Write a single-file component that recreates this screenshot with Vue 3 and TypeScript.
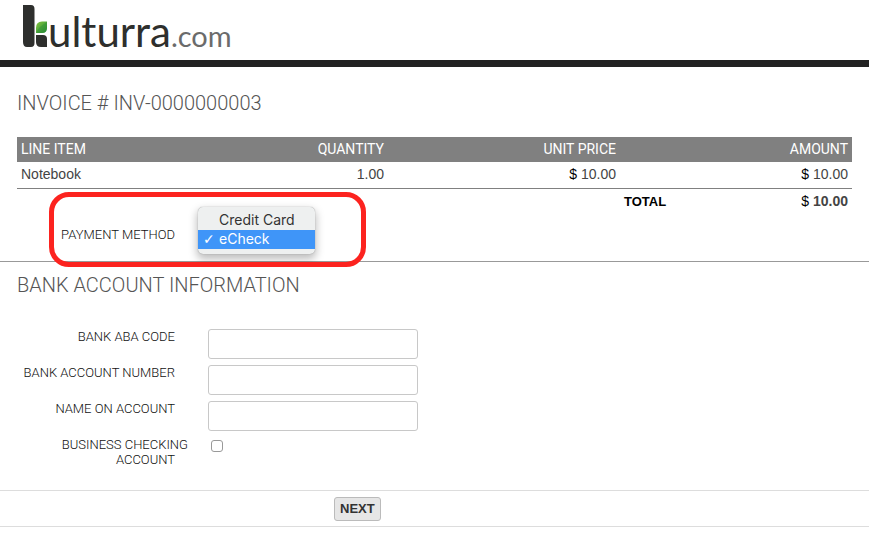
<script setup lang="ts">
import { ref } from 'vue'

interface LineItem {
  name: string
  quantity: number
  unitPrice: number
}

const items: LineItem[] = [{ name: 'Notebook', quantity: 1, unitPrice: 10 }]
const total = items.reduce((sum, item) => sum + item.quantity * item.unitPrice, 0)
const money = (value: number): string => value.toFixed(2)

const method = ref('echeck')
const abaCode = ref('')
const accountNumber = ref('')
const accountName = ref('')
const business = ref(false)
</script>

<template>
  <header class="masthead">
    <a class="logo" href="#">
      <svg class="mark" viewBox="0 0 25 42" aria-hidden="true">
        <defs>
          <linearGradient id="leaf" x1="0" y1="0" x2="1" y2="1">
            <stop offset="0" stop-color="#86c440" />
            <stop offset="0.5" stop-color="#55aa3b" />
            <stop offset="1" stop-color="#278b35" />
          </linearGradient>
        </defs>
        <path d="M0 0H8Q11.500 0 11.500 4V38Q11.500 42 8 42H4Q0 42 0 37Z" fill="#2e2f2d" />
        <path d="M13 28V23Q13 16.500 19 16.500H24V23Q24 28 19 28Z" fill="url(#leaf)" />
        <path d="M13 28Q16 21 24 17V23Q24 28 19 28Z" fill="#278b35" opacity="0.4" />
        <path d="M13 30H20Q24 30 24 34V42H18Q13 42 13 37Z" fill="#2e2f2d" />
      </svg>
      <span class="word">ulturra</span><span class="domain">.com</span>
    </a>
  </header>

  <main>
    <section class="invoice">
      <h1>INVOICE # INV-0000000003</h1>
      <table>
        <colgroup>
          <col /><col class="c-value" /><col class="c-value" /><col class="c-value" />
        </colgroup>
        <thead>
          <tr><th>LINE ITEM</th><th>QUANTITY</th><th>UNIT PRICE</th><th>AMOUNT</th></tr>
        </thead>
        <tbody>
          <tr v-for="item in items" :key="item.name">
            <td>{{ item.name }}</td>
            <td>{{ money(item.quantity) }}</td>
            <td><span class="currency">$</span> {{ money(item.unitPrice) }}</td>
            <td><span class="currency">$</span> {{ money(item.quantity * item.unitPrice) }}</td>
          </tr>
        </tbody>
        <tfoot>
          <tr>
            <td colspan="3"></td>
            <td>
              <div class="total">
                <span class="total-label">TOTAL</span>
                <span><span class="currency">$</span> <b>{{ money(total) }}</b></span>
              </div>
            </td>
          </tr>
        </tfoot>
      </table>
    </section>

    <section class="payment">
      <label class="caption" for="method">PAYMENT METHOD</label>
      <select id="method" v-model="method" class="menu" size="2">
        <option value="card">Credit Card</option>
        <option value="echeck">eCheck</option>
      </select>
      <div class="callout" aria-hidden="true"></div>
    </section>

    <form @submit.prevent>
      <section class="bank">
        <h2>BANK ACCOUNT INFORMATION</h2>
        <div class="field">
          <label class="caption" for="aba">BANK ABA CODE</label>
          <input id="aba" v-model="abaCode" class="text" type="text" />
        </div>
        <div class="field">
          <label class="caption" for="number">BANK ACCOUNT NUMBER</label>
          <input id="number" v-model="accountNumber" class="text" type="text" />
        </div>
        <div class="field">
          <label class="caption" for="name">NAME ON ACCOUNT</label>
          <input id="name" v-model="accountName" class="text" type="text" />
        </div>
        <div class="field">
          <label class="caption" for="business"><span class="overhang">BUSINESS CHECKING</span> ACCOUNT</label>
          <input id="business" v-model="business" class="tick" type="checkbox" />
        </div>
      </section>
      <div class="actions"><button type="submit">NEXT</button></div>
    </form>
  </main>
</template>

<style>
body {
  background: #fff;
}
</style>

<style scoped>
* {
  box-sizing: border-box;
}
.masthead {
  padding: 5px 23px 0;
  height: 67px;
  border-bottom: 7px solid #222;
}
.logo {
  display: inline-flex;
  align-items: baseline;
  color: #2e2f2d;
  text-decoration: none;
  font-family: Lato, sans-serif;
  line-height: 48px;
}
.mark {
  width: 25px;
  height: 42px;
}
.word {
  font-size: 42px;
}
.domain {
  font-size: 29px;
  color: #6b6b6b;
}
main {
  font-family: "Liberation Sans", Arial, sans-serif;
  font-size: 14px;
  color: #444;
}
.invoice {
  padding: 22px 17px 0;
}
h1,
h2 {
  margin: 0;
  font-family: Roboto, sans-serif;
  font-weight: 300;
  font-size: 20px;
  line-height: 28px;
  color: #555;
}
table {
  width: 100%;
  margin-top: 20px;
  border-collapse: collapse;
  table-layout: fixed;
}
.c-value {
  width: 232px;
}
th,
td {
  height: 25px;
  padding: 0 4px;
  line-height: 17px;
  text-align: right;
}
th {
  background: #808080;
  color: #fff;
  font-family: Roboto, sans-serif;
  font-weight: 400;
}
th:first-child,
td:first-child {
  text-align: left;
}
tbody td {
  height: 26px;
  border-bottom: 1px solid #808080;
}
tfoot td {
  height: 26px;
}
.currency {
  color: #000;
}
.total {
  display: flex;
  justify-content: space-between;
}
.total-label {
  color: #000;
  font-size: 13px;
  font-weight: 700;
}
.payment {
  position: relative;
  display: flex;
  align-items: flex-start;
  height: 48px;
  padding-left: 17px;
  border-bottom: 1px solid #999;
}
.caption {
  flex: none;
  width: 158px;
  font-family: Roboto, sans-serif;
  font-size: 13px;
  font-weight: 300;
  line-height: 15px;
  text-align: right;
  color: #111;
}
.payment .caption {
  margin-top: 13px;
}
.menu {
  width: 117px;
  height: 47px;
  margin: -7px 0 0 23px;
  padding: 4px 0;
  overflow: hidden;
  border: 0;
  border-radius: 5px;
  outline: 0;
  background: #eef0f0;
  box-shadow: 0 0 1px #888, 0 4px 8px 1px #0004;
  font-family: Inter, sans-serif;
  font-size: 14px;
  color: #333;
}
.menu option {
  height: 19px;
  min-height: 19px;
  padding: 0 0 0 21px;
  line-height: 19px;
}
.menu option:checked {
  padding-left: 5px;
  background: linear-gradient(#3f95f8, #3f95f8);
  color: #fff;
}
.menu option:checked::before {
  content: "✓";
  display: inline-block;
  width: 16px;
  font-weight: 700;
  font-family: "DejaVu Sans", sans-serif;
  font-size: 14px;
  line-height: 14px;
}
.callout {
  position: absolute;
  top: -22px;
  left: 49px;
  width: 317px;
  height: 75px;
  border: 5px solid #fc231f;
  border-radius: 20px;
  pointer-events: none;
}
.bank {
  padding: 9px 17px 17px;
}
h2 {
  margin-bottom: 30px;
}
.field {
  display: flex;
  align-items: flex-start;
  min-height: 36px;
}
.text {
  width: 210px;
  height: 30px;
  margin-left: 33px;
  border: 1px solid #c8c8c8;
  border-radius: 3px;
  padding: 4px 6px;
  background: #fff;
}
.overhang {
  display: block;
  margin: 0 -13px;
}
.tick {
  appearance: none;
  width: 12px;
  height: 12px;
  margin: 3px 0 0 36px;
  border: 1px solid #999;
  border-radius: 3px;
  background: #fff;
}
.tick:checked {
  background: #3f95f8;
}
.actions {
  display: flex;
  padding: 6px 0 5px 334px;
  border: solid #ddd;
  border-width: 1px 0;
}
button {
  height: 24px;
  padding: 0 5px;
  border: 1px solid #bbb;
  border-radius: 3px;
  background: #e6e6e6;
  color: #333;
  font: 700 13px/20px "Liberation Sans", Arial, sans-serif;
}
</style>
